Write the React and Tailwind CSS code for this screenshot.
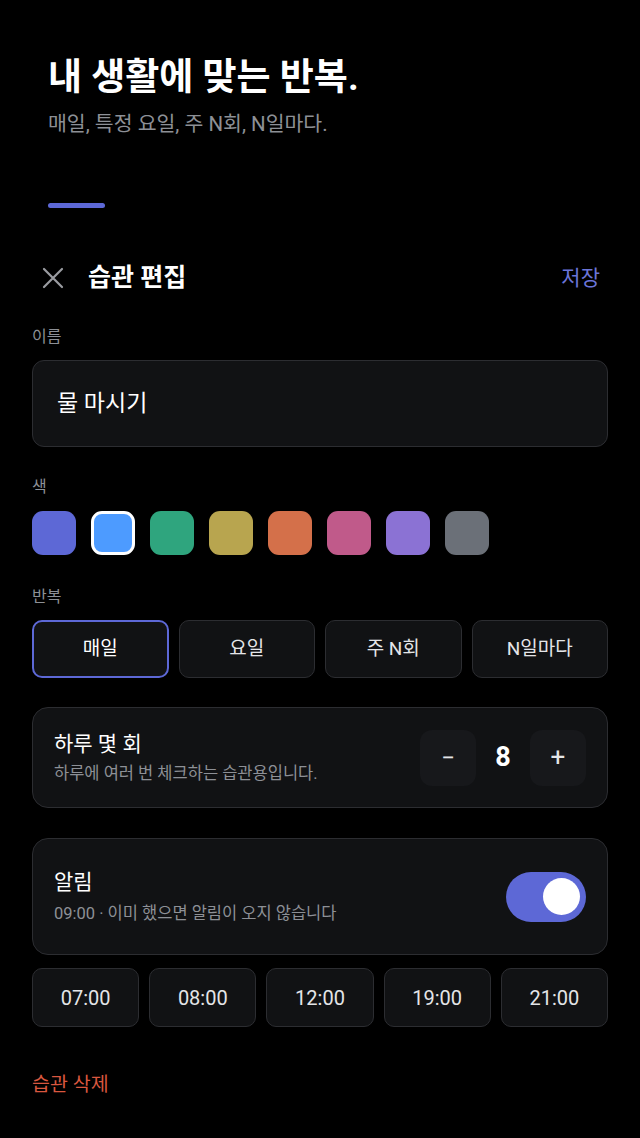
import { useState } from "react";

const SWATCHES = [
  "#5d68d6",
  "#4d9bff",
  "#2fa57e",
  "#b8a54f",
  "#d4704a",
  "#c05a8a",
  "#8b72d4",
  "#6b7078",
];

const REPEATS = ["매일", "요일", "주 N회", "N일마다"];
const TIMES = ["07:00", "08:00", "12:00", "19:00", "21:00"];

export default function App() {
  const [color, setColor] = useState(1);
  const [repeat, setRepeat] = useState(0);
  const [count, setCount] = useState(8);
  const [alarm, setAlarm] = useState(true);

  return (
    <div
      className="min-h-[1138px] w-[640px] bg-black text-white"
      style={{ fontFamily: 'Roboto, "Noto Sans CJK KR", sans-serif' }}
    >
      {/* intro */}
      <div className="px-12 pt-[56px]">
        <h1 className="text-[37px] font-bold leading-[44px]">
          내 생활에 맞는 반복.
        </h1>
        <p className="mt-[11px] text-[20.5px] leading-[26px] text-[#8d9096]">
          매일, 특정 요일, 주 N회, N일마다.
        </p>
        <div className="mt-[66px] h-[5px] w-[57px] rounded-full bg-[#5d68d6]" />
      </div>

      {/* header */}
      <div className="mt-[54px] flex h-[32px] items-center justify-between px-8">
        <div className="flex items-center">
          <button className="ml-[9px] flex h-6 w-6 items-center justify-center text-[#9a9ca1]">
            <svg width="22" height="22" viewBox="0 0 22 22" fill="none">
              <path
                d="M2 2L20 20M20 2L2 20"
                stroke="currentColor"
                strokeWidth="2.2"
                strokeLinecap="round"
              />
            </svg>
          </button>
          <span className="ml-[23px] text-[25px] font-bold leading-[32px]">
            습관 편집
          </span>
        </div>
        <button className="mr-[8px] text-[21px] leading-[32px] text-[#6b75d9]">
          저장
        </button>
      </div>

      <div className="px-8">
        {/* name */}
        <div className="mt-[33px] text-[16px] leading-[20px] text-[#8d9096]">이름</div>
        <div className="mt-[13px] flex h-[87px] items-center rounded-[12px] border border-[#2c2d31] bg-[#111214] px-6">
          <span className="text-[23px] leading-[28px]">물 마시기</span>
        </div>

        {/* color */}
        <div className="mt-[30px] text-[16px] leading-[20px] text-[#8d9096]">색</div>
        <div className="mt-[14px] flex gap-[15px]">
          {SWATCHES.map((c, i) => (
            <button
              key={c}
              onClick={() => setColor(i)}
              className={
                i === color
                  ? "h-[44px] w-[44px] rounded-[11px] border-[3px] border-white"
                  : "h-[44px] w-[44px] rounded-[11px]"
              }
              style={{ backgroundColor: c }}
            />
          ))}
        </div>

        {/* repeat */}
        <div className="mt-[32px] text-[16px] leading-[20px] text-[#8d9096]">반복</div>
        <div className="mt-[13px] grid grid-cols-4 gap-[10px]">
          {REPEATS.map((r, i) => (
            <button
              key={r}
              onClick={() => setRepeat(i)}
              className={
                i === repeat
                  ? "h-[58px] rounded-[10px] border-2 border-[#5d68d6] bg-[#111214] text-[19px] text-white"
                  : "h-[58px] rounded-[10px] border border-[#2c2d31] bg-[#111214] text-[19px] text-[#e4e5e8]"
              }
            >
              {r}
            </button>
          ))}
        </div>

        {/* per day */}
        <div className="mt-[29px] flex h-[101px] items-center justify-between rounded-[16px] border border-[#2c2d31] bg-[#111214] px-[21px]">
          <div>
            <div className="text-[21px] leading-[26px]">하루 몇 회</div>
            <div className="mt-[6px] text-[16.5px] leading-[22px] text-[#8d9096]">
              하루에 여러 번 체크하는 습관용입니다.
            </div>
          </div>
          <div className="flex items-center">
            <button
              onClick={() => setCount(Math.max(1, count - 1))}
              className="flex h-[56px] w-[56px] items-center justify-center rounded-[12px] bg-[#17181b] text-[24px] text-[#e4e5e8]"
            >
              −
            </button>
            <span className="w-[54px] text-center text-[27px] font-bold">{count}</span>
            <button
              onClick={() => setCount(count + 1)}
              className="flex h-[56px] w-[56px] items-center justify-center rounded-[12px] bg-[#17181b] text-[26px] text-[#e4e5e8]"
            >
              +
            </button>
          </div>
        </div>

        {/* alarm */}
        <div className="mt-[30px] flex h-[117px] items-center justify-between rounded-[16px] border border-[#2c2d31] bg-[#111214] px-[21px]">
          <div>
            <div className="text-[21px] leading-[26px]">알림</div>
            <div className="mt-[8px] text-[16.5px] leading-[22px] text-[#8d9096]">
              09:00 · 이미 했으면 알림이 오지 않습니다
            </div>
          </div>
          <button
            onClick={() => setAlarm(!alarm)}
            className={
              alarm
                ? "flex h-[50px] w-[80px] items-center justify-end rounded-full bg-[#5d68d6] px-[6px]"
                : "flex h-[50px] w-[80px] items-center justify-start rounded-full bg-[#3a3b40] px-[6px]"
            }
          >
            <span className="h-[37px] w-[37px] rounded-full bg-white" />
          </button>
        </div>

        {/* times */}
        <div className="mt-[13px] grid grid-cols-5 gap-[10px]">
          {TIMES.map((t) => (
            <button
              key={t}
              className="h-[59px] rounded-[10px] border border-[#2c2d31] bg-[#111214] text-[20px] text-[#e4e5e8]"
            >
              {t}
            </button>
          ))}
        </div>

        {/* delete */}
        <button className="mt-[46px] text-[19.5px] leading-[24px] text-[#d9573f]">
          습관 삭제
        </button>
      </div>
    </div>
  );
}
